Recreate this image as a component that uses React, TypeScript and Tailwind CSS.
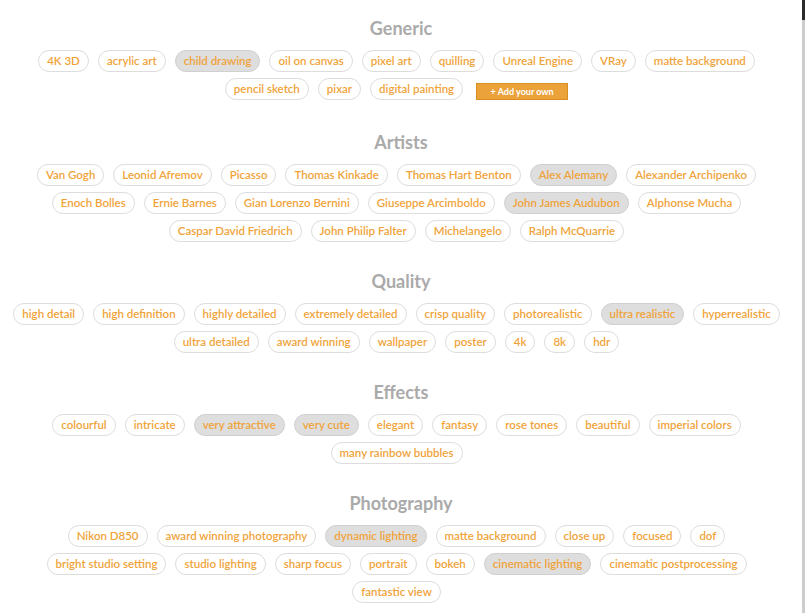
import React from 'react';

type Tag = { label: string; active?: boolean };

const sections: { title: string; tags: Tag[]; addButton?: boolean }[] = [
  {
    title: 'Generic',
    addButton: true,
    tags: [
      { label: '4K 3D' },
      { label: 'acrylic art' },
      { label: 'child drawing', active: true },
      { label: 'oil on canvas' },
      { label: 'pixel art' },
      { label: 'quilling' },
      { label: 'Unreal Engine' },
      { label: 'VRay' },
      { label: 'matte background' },
      { label: 'pencil sketch' },
      { label: 'pixar' },
      { label: 'digital painting' },
    ],
  },
  {
    title: 'Artists',
    tags: [
      { label: 'Van Gogh' },
      { label: 'Leonid Afremov' },
      { label: 'Picasso' },
      { label: 'Thomas Kinkade' },
      { label: 'Thomas Hart Benton' },
      { label: 'Alex Alemany', active: true },
      { label: 'Alexander Archipenko' },
      { label: 'Enoch Bolles' },
      { label: 'Ernie Barnes' },
      { label: 'Gian Lorenzo Bernini' },
      { label: 'Giuseppe Arcimboldo' },
      { label: 'John James Audubon', active: true },
      { label: 'Alphonse Mucha' },
      { label: 'Caspar David Friedrich' },
      { label: 'John Philip Falter' },
      { label: 'Michelangelo' },
      { label: 'Ralph McQuarrie' },
    ],
  },
  {
    title: 'Quality',
    tags: [
      { label: 'high detail' },
      { label: 'high definition' },
      { label: 'highly detailed' },
      { label: 'extremely detailed' },
      { label: 'crisp quality' },
      { label: 'photorealistic' },
      { label: 'ultra realistic', active: true },
      { label: 'hyperrealistic' },
      { label: 'ultra detailed' },
      { label: 'award winning' },
      { label: 'wallpaper' },
      { label: 'poster' },
      { label: '4k' },
      { label: '8k' },
      { label: 'hdr' },
    ],
  },
  {
    title: 'Effects',
    tags: [
      { label: 'colourful' },
      { label: 'intricate' },
      { label: 'very attractive', active: true },
      { label: 'very cute', active: true },
      { label: 'elegant' },
      { label: 'fantasy' },
      { label: 'rose tones' },
      { label: 'beautiful' },
      { label: 'imperial colors' },
      { label: 'many rainbow bubbles' },
    ],
  },
  {
    title: 'Photography',
    tags: [
      { label: 'Nikon D850' },
      { label: 'award winning photography' },
      { label: 'dynamic lighting', active: true },
      { label: 'matte background' },
      { label: 'close up' },
      { label: 'focused' },
      { label: 'dof' },
      { label: 'bright studio setting' },
      { label: 'studio lighting' },
      { label: 'sharp focus' },
      { label: 'portrait' },
      { label: 'bokeh' },
      { label: 'cinematic lighting', active: true },
      { label: 'cinematic postprocessing' },
      { label: 'fantastic view' },
    ],
  },
];

function Pill({ tag }: { tag: Tag }) {
  return (
    <button
      className={`mr-[9px] mb-[6px] h-[22px] px-[8px] rounded-full border text-[11.5px] leading-none font-semibold text-[#f0a33a] ${
        tag.active ? 'bg-[#dedede] border-[#d0d0d0]' : 'bg-white border-[#dddddd]'
      }`}
    >
      {tag.label}
    </button>
  );
}

function App() {
  return (
    <div
      className="flex h-screen overflow-hidden bg-white"
      style={{ fontFamily: 'Lato, "Open Sans", sans-serif' }}
    >
      <main className="flex-1 px-[10px] pt-[18px]">
        {sections.map((section, i) => (
          <section key={section.title} className={i === 0 ? 'mb-[26px]' : 'mb-[23px]'}>
            <h3 className="text-center text-[18px] leading-[20px] font-bold text-[#aaaaaa] mb-[12px]">
              {section.title}
            </h3>
            <div className="flex flex-wrap justify-center">
              {section.tags.map((tag) => (
                <Pill key={tag.label} tag={tag} />
              ))}
              {section.addButton && (
                <button className="ml-[4px] mr-[9px] mt-[5px] mb-[6px] h-[17px] w-[92px] bg-[#eca23a] border border-[#d98f20] text-white text-[9px] font-bold leading-none">
                  + Add your own
                </button>
              )}
            </div>
          </section>
        ))}
      </main>
      <div className="w-[3px] flex flex-col">
        <div className="h-[20px] bg-[#2b2b2b]" />
        <div className="flex-1 bg-[#cdcdcd]" />
      </div>
    </div>
  );
}

export default App;
